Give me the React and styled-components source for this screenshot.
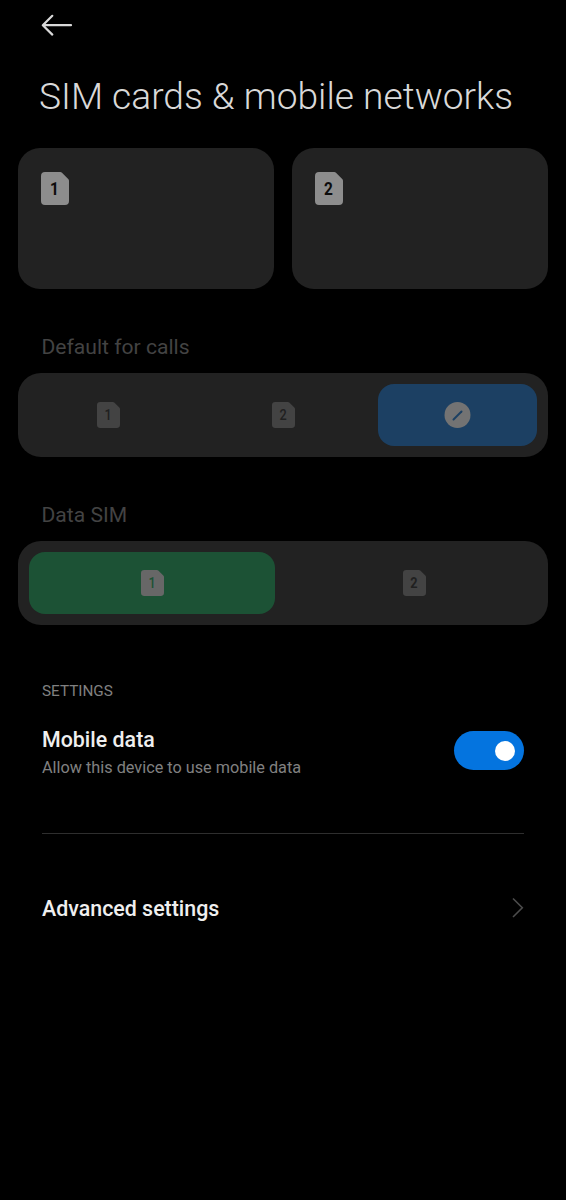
import { useState } from 'react'
import styled, { createGlobalStyle } from 'styled-components'

const GlobalStyle = createGlobalStyle`
    * {
        box-sizing: border-box;
    }
    body {
        margin: 0;
        background: #000;
        font-family: Roboto, 'Liberation Sans', sans-serif;
    }
    button {
        padding: 0;
        border: 0;
        background: none;
        font: inherit;
        color: inherit;
        text-align: left;
    }
`

const Screen = styled.main`
    display: flex;
    flex-direction: column;
    min-height: 1200px;
    padding: 0 18px;
    background: #000;
`

const BackButton = styled.button`
    display: flex;
    align-self: flex-start;
    margin: 13px 0 0 23px;
`

const Title = styled.h1`
    margin: 38px 0 0 21px;
    font-size: 37.15px;
    font-weight: 300;
    line-height: 44px;
    white-space: nowrap;
    color: #d9d9d9;
`

const SimCards = styled.div`
    display: grid;
    grid-template-columns: 1fr 1fr;
    gap: 18px;
    margin-top: 29px;
`

const SimCard = styled.div`
    height: 141px;
    padding: 24px 23px;
    border-radius: 22px;
    background: #222;
`

const Label = styled.h2`
    margin: 46px 0 0 23.5px;
    font-size: 21.1px;
    font-weight: 400;
    line-height: 24px;
    color: #434343;
`

const Segments = styled.div`
    display: flex;
    gap: 16px;
    height: 84px;
    margin-top: 14px;
    padding: 11px;
    border-radius: 23px;
    background: #222;
`

const Segment = styled.button`
    display: flex;
    flex: 1;
    align-items: center;
    justify-content: center;
    border-radius: 16px;
    background: ${(props) => props.$color || 'transparent'};
`

const SettingsList = styled.section`
    display: flex;
    flex-direction: column;
    padding: 0 24px;
`

const SectionTitle = styled.h3`
    margin: 57px 0 0;
    font-size: 15.3px;
    font-weight: 400;
    line-height: 18px;
    color: #808080;
`

const Row = styled.div`
    display: flex;
    align-items: ${(props) => props.$align || 'center'};
    justify-content: space-between;
    margin-top: ${(props) => props.$top}px;
`

const RowTitle = styled.div`
    font-size: 21.4px;
    font-weight: 500;
    line-height: 28px;
    color: #efefef;
`

const RowText = styled.div`
    margin-top: 2px;
    font-size: 16.25px;
    line-height: 24px;
    color: #808080;
`

const Switch = styled.button`
    display: flex;
    align-items: center;
    justify-content: ${(props) => (props.$on ? 'flex-end' : 'flex-start')};
    width: 70px;
    height: 39px;
    margin-top: 5px;
    padding: 0 9px;
    border-radius: 20px;
    background: ${(props) => (props.$on ? '#0474df' : '#3a3a3a')};
`

const Knob = styled.span`
    width: 20px;
    height: 20px;
    border-radius: 50%;
    background: #fff;
`

const Divider = styled.hr`
    width: 100%;
    height: 1px;
    margin: 53px 0 0;
    border: 0;
    background: #2e2e2e;
`

const Chevron = styled.svg`
    margin-bottom: 2px;
`

const Digit = styled.text`
    font-family: Roboto, 'Liberation Sans', sans-serif;
    font-size: 17.6px;
    font-weight: ${(props) => props.$weight};
    text-anchor: middle;
`

const SimIcon = ({ number, width, height, fill, color, weight = 500 }) => (
    <svg width={width} height={height} viewBox="0 0 28 33" preserveAspectRatio="none">
        <path
            d="M4 0h15.2a2.5 2.5 0 0 1 1.8.7l6.2 6.2a2.5 2.5 0 0 1 .8 1.8V29a4 4 0 0 1-4 4H4a4 4 0 0 1-4-4V4a4 4 0 0 1 4-4Z"
            fill={fill}
        />
        <Digit transform="translate(13.4 22.6) scale(.88 1)" fill={color} $weight={weight}>
            {number}
        </Digit>
    </svg>
)

const NoneIcon = () => (
    <svg width="27" height="26" viewBox="0 0 27 26">
        <circle cx="13.5" cy="13" r="13" fill="#737373" />
        <path d="M9.5 17.5l8-8" stroke="#1c4063" strokeWidth="2" strokeLinecap="round" />
    </svg>
)

const App = () => {
    const [mobileData, setMobileData] = useState(true)

    return (
        <>
            <GlobalStyle />
            <Screen>
                <BackButton aria-label="Back">
                    <svg width="32" height="24" viewBox="0 0 32 24" fill="none">
                        <path
                            d="M30 12.2H2M11.3 2.8L1.8 12.2l9.5 9.4"
                            stroke="#d9d9d9"
                            strokeWidth="2.2"
                            strokeLinecap="round"
                            strokeLinejoin="round"
                        />
                    </svg>
                </BackButton>
                <Title>SIM cards &amp; mobile networks</Title>
                <SimCards>
                    {[1, 2].map((n) => (
                        <SimCard key={n}>
                            <SimIcon number={n} width={28} height={33} fill="#8d8d8d" color="#0c0c0c" weight={700} />
                        </SimCard>
                    ))}
                </SimCards>

                <Label>Default for calls</Label>
                <Segments>
                    {[1, 2].map((n) => (
                        <Segment key={n}>
                            <SimIcon number={n} width={23} height={26} fill="#434343" color="#202020" />
                        </Segment>
                    ))}
                    <Segment $color="#1c4063" aria-label="None">
                        <NoneIcon />
                    </Segment>
                </Segments>

                <Label>Data SIM</Label>
                <Segments>
                    <Segment $color="#1c5235">
                        <SimIcon number={1} width={23} height={26} fill="#676767" color="#1c5235" />
                    </Segment>
                    <Segment>
                        <SimIcon number={2} width={23} height={26} fill="#434343" color="#202020" weight={700} />
                    </Segment>
                </Segments>

                <SettingsList>
                    <SectionTitle>SETTINGS</SectionTitle>
                    <Row $top={26} $align="flex-start">
                        <div>
                            <RowTitle>Mobile data</RowTitle>
                            <RowText>Allow this device to use mobile data</RowText>
                        </div>
                        <Switch
                            role="switch"
                            aria-checked={mobileData}
                            $on={mobileData}
                            onClick={() => setMobileData(!mobileData)}
                        >
                            <Knob />
                        </Switch>
                    </Row>
                    <Divider />
                    <Row $top={61}>
                        <RowTitle>Advanced settings</RowTitle>
                        <Chevron width="12" height="22" viewBox="0 0 12 22" fill="none">
                            <path d="M1 1.5L10.3 10.7l-9.3 9.3" stroke="#4c4c4c" strokeWidth="1.6" />
                        </Chevron>
                    </Row>
                </SettingsList>
            </Screen>
        </>
    )
}

export default App
